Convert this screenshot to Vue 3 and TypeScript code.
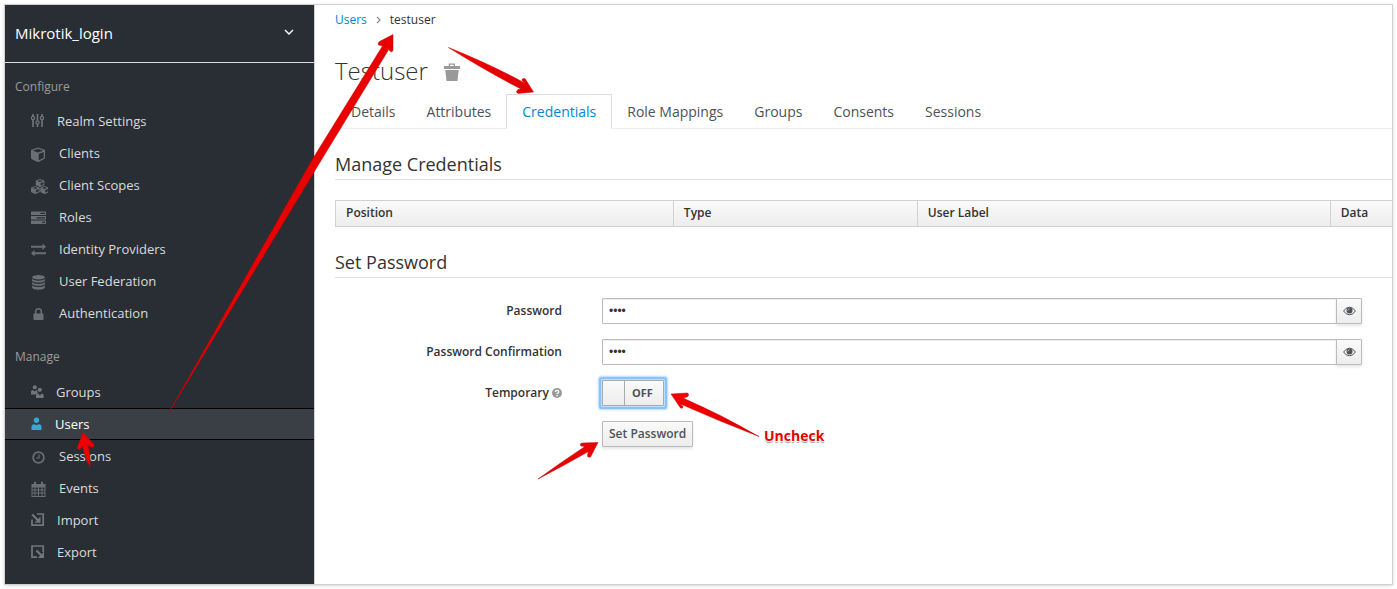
<script setup lang="ts">
import { ref } from 'vue'

interface NavItem {
  label: string
  icon: string
  size: 'fa' | 'pf' | 'group' | 'user'
  active?: boolean
}

const configure: NavItem[] = [
  { label: 'Realm Settings', icon: 'sliders', size: 'pf' },
  { label: 'Clients', icon: 'cube', size: 'fa' },
  { label: 'Client Scopes', icon: 'cubes', size: 'fa' },
  { label: 'Roles', icon: 'tasks', size: 'fa' },
  { label: 'Identity Providers', icon: 'exchange', size: 'fa' },
  { label: 'User Federation', icon: 'database', size: 'fa' },
  { label: 'Authentication', icon: 'lock', size: 'fa' },
]

const manage: NavItem[] = [
  { label: 'Groups', icon: 'groups', size: 'group' },
  { label: 'Users', icon: 'user', size: 'user', active: true },
  { label: 'Sessions', icon: 'clock', size: 'fa' },
  { label: 'Events', icon: 'calendar', size: 'fa' },
  { label: 'Import', icon: 'import', size: 'pf' },
  { label: 'Export', icon: 'export', size: 'pf' },
]

const sections = [
  { title: 'Configure', items: configure },
  { title: 'Manage', items: manage },
]

const tabs = ['Details', 'Attributes', 'Credentials', 'Role Mappings', 'Groups', 'Consents', 'Sessions']
const activeTab = ref('Credentials')
const columns = ['Position', 'Type', 'User Label', 'Data']

const password = ref('pass')
const confirmation = ref('pass')
const temporary = ref(false)
</script>

<template>
  <div class="frame">
    <aside class="sidebar">
      <button class="realm" type="button">
        <span>Mikrotik_login</span>
        <svg width="10" height="7" viewBox="0 0 10 7"><path d="M1 1l4 4 4-4" fill="none" stroke="#fff" stroke-width="1.4" /></svg>
      </button>
      <nav v-for="section in sections" :key="section.title" class="section">
        <h2 class="section-title">{{ section.title }}</h2>
        <a v-for="item in section.items" :key="item.label" href="#" class="item" :class="{ active: item.active }">
          <svg class="icon" :class="item.size" height="18" viewBox="0 0 18 18" preserveAspectRatio="xMinYMid slice">
            <g v-if="item.icon === 'sliders'">
              <path d="M3 2v2M3 8v7M7.500 2v6.500M7.500 12.500V15M12 2v2M12 8v7" stroke="currentColor" stroke-width="1.600" />
              <g fill="none" stroke="currentColor" stroke-width="1.200">
                <circle cx="3" cy="6" r="1.600" /><circle cx="7.500" cy="10.500" r="1.600" /><circle cx="12" cy="6" r="1.600" />
              </g>
            </g>
            <path v-else-if="item.icon === 'cube'" fill="currentColor" fill-rule="evenodd" d="M8 3.500l6.500 2.300a.8.8 0 0 1 .5.800v7.200a1 1 0 0 1-.5.900L8.500 18h-1L1.500 14.900a1 1 0 0 1-.5-.9V6.600a.8.8 0 0 1 .5-.8zM8 4.800L2.800 6.700 8 8.600l5.200-1.900zM8.700 16.300l5-2.600V8l-5 1.900z" />
            <g v-else-if="item.icon === 'cubes'">
              <g v-for="p in [[5.700, 3], [1, 10], [10.300, 10]]" :key="p[0]" :transform="`translate(${p[0]} ${p[1]})`">
                <path fill="currentColor" fill-rule="evenodd" d="M4.300 0l4 1.600q.4.200.4.600v3.500q0 .4-.4.600l-3.700 1.700h-.6L.4 6.300Q0 6.100 0 5.700V2.200q0-.4.400-.6zM4.300 1L1.700 2l2.600 1.100L6.900 2zM4.900 6.600l2.800-1.300V3L4.900 4.200z" />
              </g>
            </g>
            <path v-else-if="item.icon === 'tasks'" fill="currentColor" fill-rule="evenodd" d="M1 3.500h15v3.600H1zM10.500 4.700v1.200H15V4.700zM1 8h15v3.600H1zM6.500 9.200v1.200H15V9.200zM1 12.500h15v3.600H1zM12 13.700v1.200h3v-1.200z" />
            <path v-else-if="item.icon === 'exchange'" fill="currentColor" d="M1 5.800h11.500V3.500L16 6.800 12.500 10V7.700H1zM16 12.200H4.500V10L1 13.300l3.500 3.200v-2.300H16z" />
            <g v-else-if="item.icon === 'database'" fill="currentColor">
              <ellipse cx="8.500" cy="5.200" rx="6.500" ry="2.200" />
              <path d="M2 7q2 1.700 6.500 1.700T15 7v1.500q-1 2-6.500 2T2 8.500zM2 10.200q2 1.700 6.500 1.700t6.500-1.700v1.500q-1 2-6.500 2T2 11.700zM2 13.400q2 1.700 6.500 1.700t6.500-1.700v1.800q-1 2.500-6.500 2.500T2 15.200z" />
            </g>
            <g v-else-if="item.icon === 'lock'">
              <rect x="3.500" y="9.500" width="10" height="6.500" rx="0.800" fill="currentColor" />
              <path d="M5.700 10V7.500a2.800 2.800 0 0 1 5.600 0V10" fill="none" stroke="currentColor" stroke-width="1.600" />
            </g>
            <g v-else-if="item.icon === 'groups'" fill="currentColor">
              <circle cx="4.800" cy="4.300" r="2" /><circle cx="9.800" cy="6.800" r="2.100" />
              <path d="M1 11.500V9q0-2 2-2l1.700 1.500L6.500 7q.8 0 1 .9-.3 1.600.6 2.200-1.600.2-2.100 1.400zM6 15v-2.500q0-2 2-2l1.900 1.800 1.900-1.800q1.900 0 1.900 2V15z" />
            </g>
            <g v-else-if="item.icon === 'user'" fill="currentColor">
              <circle cx="6.500" cy="5.200" r="2.700" />
              <path d="M1.500 15v-3.300q0-2.500 2.500-2.500h.3q2.200 1.500 4.400 0H9q2.500 0 2.500 2.500V15z" />
            </g>
            <g v-else-if="item.icon === 'clock'" fill="none" stroke="currentColor">
              <circle cx="8.500" cy="10.500" r="5.400" stroke-width="1.700" /><path d="M9 7.500v3.500H6.200" stroke-width="1.200" />
            </g>
            <g v-else-if="item.icon === 'calendar'">
              <path fill="currentColor" fill-rule="evenodd" d="M1.500 5h14v13h-14zM2.500 8.500v2h2v-2zM5.500 8.500v2H8v-2zM9 8.500v2h2.500v-2zM12.500 8.500v2h2v-2zM2.500 11.500v2h2v-2zM5.500 11.500v2H8v-2zM9 11.500v2h2.500v-2zM12.500 11.500v2h2v-2zM2.500 14.500V17h2v-2.500zM5.500 14.500V17H8v-2.500zM9 14.500V17h2.500v-2.500zM12.500 14.500V17h2v-2.500z" />
              <path d="M5 3.500v3M12 3.500v3" stroke="currentColor" stroke-width="2" stroke-linecap="round" />
            </g>
            <g v-else-if="item.icon === 'import'" fill="none" stroke="currentColor" stroke-width="1.700">
              <path d="M7 3h6.200v11.200H2V8.500" /><path d="M2.200 3.500l6 6" stroke-width="2.200" /><path d="M10.500 5.500v6.200h-6z" fill="currentColor" stroke="none" />
            </g>
            <g v-else fill="none" stroke="currentColor" stroke-width="1.700">
              <path d="M7 14.200H2V3h11.200v6" /><path d="M6.500 7.500l5 5" stroke-width="2.200" /><path d="M14 8.700V15H7.700z" fill="currentColor" stroke="none" />
            </g>
          </svg>
          <span>{{ item.label }}</span>
        </a>
      </nav>
    </aside>

    <main class="content">
      <div class="crumbs">
        <a href="#">Users</a>
        <svg width="5" height="8" viewBox="0 0 5 8"><path d="M1 1l3 3-3 3" fill="none" stroke="#8b8d8f" stroke-width="1.200" /></svg>
        <span>testuser</span>
      </div>
      <div class="title">
        <h1>Testuser</h1>
        <button type="button" class="trash" aria-label="Delete user">
          <svg width="16" height="18" viewBox="0 0 16 18" fill="#999">
            <path d="M0 3h4.700V.5h6.300V3H16v3H0zM6 1.700V3h3.700V1.700z" fill-rule="evenodd" /><path d="M1.300 7h13.400l-1.200 11h-11z" />
          </svg>
        </button>
      </div>
      <div class="tabs" role="tablist">
        <button v-for="tab in tabs" :key="tab" type="button" role="tab" class="tab" :class="{ current: tab === activeTab }" :aria-selected="tab === activeTab" @click="activeTab = tab">{{ tab }}</button>
      </div>

      <h2 class="legend">Manage Credentials</h2>
      <table class="grid">
        <colgroup><col class="c1" /><col class="c2" /><col class="c3" /><col /></colgroup>
        <thead>
          <tr><th v-for="column in columns" :key="column" scope="col">{{ column }}</th></tr>
        </thead>
      </table>

      <h2 class="legend">Set Password</h2>
      <form class="form" @submit.prevent>
        <label for="password">Password</label>
        <div class="field">
          <input id="password" v-model="password" type="password" />
          <button type="button" class="eye" aria-label="Show password">
            <svg width="13" height="10" viewBox="0 0 13 10"><path d="M.6 5Q3 1.200 6.500 1.200T12.400 5Q10 8.800 6.500 8.800T.6 5z" fill="none" stroke="#4d5258" /><circle cx="6.500" cy="4.500" r="3" fill="#4d5258" /><path d="M4.900 4.500Q4.900 2.900 6.500 2.900" fill="none" stroke="#ddd" stroke-width=".7" /></svg>
          </button>
        </div>
        <label for="confirmation">Password Confirmation</label>
        <div class="field">
          <input id="confirmation" v-model="confirmation" type="password" />
          <button type="button" class="eye" aria-label="Show password confirmation">
            <svg width="13" height="10" viewBox="0 0 13 10"><path d="M.6 5Q3 1.200 6.500 1.200T12.400 5Q10 8.800 6.500 8.800T.6 5z" fill="none" stroke="#4d5258" /><circle cx="6.500" cy="4.500" r="3" fill="#4d5258" /><path d="M4.900 4.500Q4.900 2.900 6.500 2.900" fill="none" stroke="#ddd" stroke-width=".7" /></svg>
          </button>
        </div>
        <label for="temporary" class="with-help">Temporary
          <svg width="10" height="10" viewBox="0 0 10 10"><circle cx="5" cy="5" r="5" fill="#999" /><path d="M3.300 3.900Q3.400 2.400 5 2.400T6.700 3.900Q6.700 4.600 5.800 5T5 6.300M5 7v1.300" fill="none" stroke="#fff" stroke-width="1.300" /></svg>
        </label>
        <div class="field">
          <span class="switch">
            <input id="temporary" v-model="temporary" type="checkbox" />
            <span class="knob"></span>
            <span class="state">{{ temporary ? 'ON' : 'OFF' }}</span>
          </span>
        </div>
        <div class="field submit"><button type="submit" class="save">Set Password</button></div>
      </form>
    </main>

    <svg class="arrows" width="1397" height="589" viewBox="0 0 1397 589" aria-hidden="true">
      <defs>
        <linearGradient id="red" x1="0" y1="0" x2="1" y2="1"><stop offset="0" stop-color="#f60000" /><stop offset="1" stop-color="#dc0000" /></linearGradient>
      </defs>
      <g fill="url(#red)" stroke="#c40000" stroke-width="0.500" stroke-linejoin="round">
        <path d="M169.500 411.500L312 160 382.500 46 378.500 45Q377.500 43 379.500 41.500L393 34.500V50.500Q391.500 53 389.500 50.500L389 49 318 165.500z" />
        <path d="M448.500 47.500Q492 65 525.500 83.500L522 80.500Q521.500 78 525 78.500L533.500 92 518 93.500Q515 92 518 89.500L521 89Q486 71 448.500 47.500z" />
        <path d="M671 394L687.500 393Q690 395 687 397L683 398Q722 415 759 436.500 719 421 680.500 404L683 406.500Q683 409 680.500 408z" />
        <path d="M598 442.500L590.500 457Q587 458 587.500 455L588.500 451.500Q563 466 538 479 560 463 585 446.500L581 446Q579 444 582 443z" />
        <path d="M83 432.500L94 444.500Q94 448 90.500 447L88 445.500Q91 456 90 467 85 458 82.500 446.500L80 449Q77 450 77.500 447z" />
      </g>
    </svg>
    <span class="note">Uncheck</span>
  </div>
</template>

<style>
body { background: #fff; }
</style>

<style scoped>
.frame {
  position: relative;
  display: flex;
  box-sizing: border-box;
  min-height: 579px;
  margin: 5px;
  background: #fff;
  box-shadow: 0 0 0 1px #d0d0d0, 0 1px 4px rgba(0, 0, 0, 0.25);
  font-family: "Open Sans", sans-serif;
  font-size: 12px;
  line-height: 18px;
  color: #333;
}
button, input { font: inherit; color: inherit; box-sizing: border-box; }
a { text-decoration: none; }
h1, h2 { margin: 0; font-weight: 400; }
.sidebar { flex: 0 0 309px; background: #292e34; border-right: 1px solid #d1d1d1; }
.realm {
  display: flex;
  align-items: center;
  justify-content: space-between;
  width: 100%;
  height: 58px;
  padding: 0 20px 2px 10px;
  border: 0;
  border-bottom: 1px solid #dcdcdc;
  background: none;
  color: #fff;
  font-size: 15px;
}
.section { padding-bottom: 13px; }
.section-title { padding: 14px 10px 8px; font-size: 12px; line-height: 20px; color: #9c9c9c; }
.section + .section .section-title { padding: 5px 10px 9px; }
.item {
  display: flex;
  align-items: center;
  gap: 11px;
  height: 32px;
  padding-left: 25px;
  color: #dbdbdb;
  font-size: 13px;
}
.icon { flex: none; color: #72767b; }
.fa { width: 18px; color: #6a6e76; }
.pf { width: 16px; }
.group { width: 15px; }
.user { width: 14px; }
.item.active { background: #393f45; color: #fff; box-shadow: inset 0 1px #000, inset 0 -1px #000; }
.active .icon { color: #39a5dc; }
.content { flex: 1; min-width: 0; padding-left: 20px; }
.crumbs { display: flex; align-items: center; gap: 9px; height: 30px; }
.crumbs a { color: #0088ce; }
.title { display: flex; align-items: center; gap: 16px; height: 34px; margin-top: 19px; }
.title h1 { font-size: 24px; line-height: 34px; font-weight: 300; }
.trash { display: flex; padding: 0; border: 0; background: none; margin-top: 2px; }
.tabs { display: flex; height: 35px; margin-top: 6px; box-shadow: inset 0 -1px #ededed; }
.tab {
  margin-right: -1px;
  padding: 0 15px;
  border: 1px solid transparent;
  background: none;
  font-size: 14px;
  color: #4d5258;
  white-space: nowrap;
}
.tab.current { border-color: #dcdcdc #dcdcdc #fff; background: #fff; color: #0088ce; }
.legend { height: 26px; margin: 24px 0 20px; border-bottom: 1px solid #e0e0e0; font-size: 18px; line-height: 22px; }
.grid { width: 100%; table-layout: fixed; border-collapse: separate; border-spacing: 0; border: 1px solid #d1d1d1; border-right: 0; }
.grid .c1 { width: 31.9%; }
.grid .c2 { width: 23.1%; }
.grid .c3 { width: 39.1%; }
.grid th {
  height: 25px;
  padding: 0 10px 1px;
  border-left: 1px solid #d1d1d1;
  background: linear-gradient(#fafafa, #ededed);
  box-sizing: border-box;
  text-align: left;
  font-weight: 600;
}
.grid th:first-child { border-left: 0; }
.form { display: grid; grid-template-columns: 227px 1fr; column-gap: 40px; row-gap: 15px; padding-right: 30px; }
.form label { text-align: right; line-height: 26px; font-weight: 600; }
.with-help svg { vertical-align: -1px; }
.field { display: flex; height: 26px; }
.field input[type="password"] {
  flex: 1;
  min-width: 0;
  padding: 0 6px;
  border: 1px solid #bbb;
  border-radius: 1px;
  box-shadow: inset 0 1px 1px rgba(0, 0, 0, 0.075);
  background: #fff;
  font-family: "Liberation Sans", sans-serif;
}
.eye, .save {
  border: 1px solid #bbb;
  border-radius: 1px;
  background: linear-gradient(#fafafa, #ededed);
  box-shadow: 0 2px 3px rgba(0, 0, 0, 0.1);
  color: #4d5258;
}
.eye { display: flex; align-items: center; justify-content: center; width: 26px; margin-left: -1px; padding: 0; }
.save { padding: 0 6px; font-weight: 600; }
.submit { grid-column: 2; }
.switch {
  position: relative;
  display: flex;
  width: 62px;
  box-sizing: border-box;
  border: 1px solid #aaa;
  border-radius: 1px;
  background: linear-gradient(#fafafa, #ededed);
  box-shadow: 0 0 0 1px #c3ddf7, 0 0 0 3px #8ac3fb, 0 0 2px 4px #b5dafd;
}
.switch input { position: absolute; inset: 0; width: 100%; height: 100%; margin: 0; opacity: 0; }
.knob { width: 21px; border-right: 1px solid #aaa; }
.state { flex: 1; padding-right: 3px; text-align: center; line-height: 24px; font-size: 11px; font-weight: 700; color: #4d5258; }
.arrows { position: absolute; left: -5px; top: -5px; pointer-events: none; }
.note {
  position: absolute;
  left: 759px;
  top: 422px;
  font-size: 14px;
  font-weight: 700;
  color: #e60000;
  text-shadow: 1px 0 #fff, -1px 0 #fff, 0 1px #fff, 0 2px 1px #999;
}
</style>
